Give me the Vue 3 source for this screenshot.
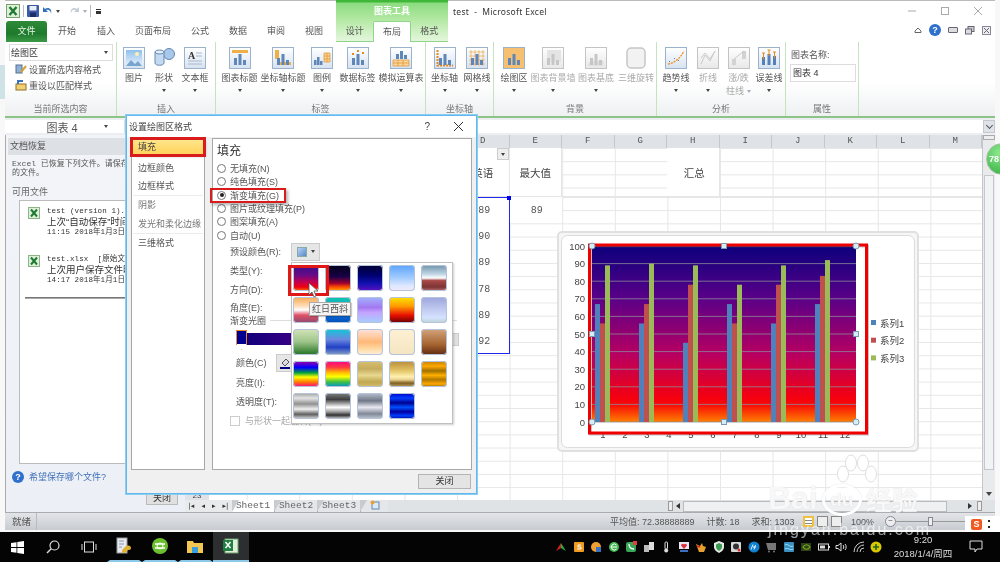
<script setup>
const tabs = [
  { label: '开始', w: 40 }, { label: '插入', w: 38 }, { label: '页面布局', w: 56 }, { label: '公式', w: 38 },
  { label: '数据', w: 38 }, { label: '审阅', w: 38 }, { label: '视图', w: 38 }
]
const toolTabs = ['设计', '布局', '格式']

const groups = [
  { name: '插入', w: 99, items: [
    { icon: 'pic', label: '图片', w: 30 }, { icon: 'shape', label: '形状', arrow: 1, w: 30 }, { icon: 'text', label: '文本框', arrow: 1, w: 32 }
  ] },
  { name: '标签', w: 210, items: [
    { icon: 'title', label: '图表标题', arrow: 1, w: 43 }, { icon: 'axtitle', label: '坐标轴标题', arrow: 1, w: 44 },
    { icon: 'legend', label: '图例', arrow: 1, w: 34 }, { icon: 'labels', label: '数据标签', arrow: 1, w: 37 },
    { icon: 'table', label: '模拟运算表', arrow: 1, w: 50 }
  ] },
  { name: '坐标轴', w: 68, items: [
    { icon: 'axis', label: '坐标轴', arrow: 1, w: 33 }, { icon: 'grid', label: '网格线', arrow: 1, w: 32 }
  ] },
  { name: '背景', w: 163, items: [
    { icon: 'plot', label: '绘图区', arrow: 1, w: 36 }, { icon: 'wall', label: '图表背景墙', arrow: 1, off: 1, w: 42 },
    { icon: 'floor', label: '图表基底', arrow: 1, off: 1, w: 44 }, { icon: 'rotate', label: '三维旋转', off: 1, w: 36 }
  ] },
  { name: '分析', w: 129, items: [
    { icon: 'trend', label: '趋势线', arrow: 1, w: 34 }, { icon: 'lines', label: '折线', arrow: 1, off: 1, w: 30 },
    { icon: 'updown', label: '涨/跌', label2: '柱线', arrow: 1, off: 1, w: 31 }, { icon: 'error', label: '误差线', arrow: 1, w: 30 }
  ] }
]

const columns = ['D', 'E', 'F', 'G', 'H', 'I', 'J', 'K', 'L', 'M']
const englishScores = [89, 90, 89, 78, 89, 92]

const radios = [
  { label: '无填充(N)' }, { label: '纯色填充(S)' }, { label: '渐变填充(G)', on: true },
  { label: '图片或纹理填充(P)' }, { label: '图案填充(A)' }, { label: '自动(U)' }
]
const sideItems = [
  { label: '填充', on: true }, { label: '边框颜色' }, { label: '边框样式', line: true },
  { label: '阴影', dim: true }, { label: '发光和柔化边缘', dim: true, line: true }, { label: '三维格式' }
]

const presets = [
  'linear-gradient(#35108c,#6a0a84 40%,#c00050 65%,#f00010 85%,#ff7000)',
  'linear-gradient(#000018,#1a0048 45%,#a00030 70%,#ff5000 85%,#ffb000)',
  'linear-gradient(#000030,#000070 40%,#1010b0 70%,#6010c0)',
  'linear-gradient(#5aa4ff,#a4ccff 50%,#dfe8ff 80%,#f6e8fa)',
  'linear-gradient(#6f92a8,#bfd6e4 35%,#fff 50%,#a84848 60%,#7c3434 85%,#b87070)',
  'linear-gradient(#f8a850,#ffdcb8 35%,#fff 50%,#e05068 70%,#8c4870)',
  'linear-gradient(#10c8a8,#10a0d8 45%,#0860d0 80%,#0050b0)',
  'linear-gradient(#a0b4ff,#a478f0 40%,#c4a4ff 60%,#a4d0ff)',
  'linear-gradient(#ffe400,#ff9c00 35%,#e81000 70%,#600000)',
  'linear-gradient(#9ca4dc,#c0c8f0 45%,#d4e2ff 80%,#bcd0d0)',
  'linear-gradient(#d4e4b8,#9cc488 50%,#207020)',
  'linear-gradient(#10c8d4,#6c88e0 40%,#2040c4 70%,#88a4c4)',
  'linear-gradient(#ffe4dc,#ffb878 50%,#ffd8a0 75%,#fff0e0)',
  'linear-gradient(#fdf0d4,#f4e4c0)',
  'linear-gradient(#d4a47c,#a46430 60%,#602810)',
  'linear-gradient(#a800a0,#0000ff 25%,#00a040 45%,#ffff00 62%,#ff8000 80%,#ff0088)',
  'linear-gradient(#ff0088,#ff4040 25%,#ffc000 45%,#ffff00 60%,#40c040 80%,#0090d8)',
  'linear-gradient(#d8c070,#c4ac5c 30%,#e8d890 55%,#c0a850 80%,#d4bc6c)',
  'linear-gradient(#b88c3c,#e0c060 35%,#fff0b0 60%,#e8d090 72%,#806020 85%,#c0a060)',
  'linear-gradient(#c08000,#ffa800 20%,#a07000 38%,#ffb000 55%,#b07800 72%,#ffa800 88%,#a07000)',
  'linear-gradient(#a0a0a0,#e4e4e4 20%,#909090 42%,#f0f0f0 62%,#606060 82%,#e0e0e0)',
  'linear-gradient(#808080,#404040 25%,#fff 55%,#a0a0a0 72%,#303030 85%,#e0e0e0)',
  'linear-gradient(#b8c0d0,#707888 30%,#e8e8f0 55%,#808898 80%,#c4ccd4)',
  'linear-gradient(#0000c0,#0040ff 20%,#000090 38%,#0050ff 55%,#0000a0 72%,#0040ff 88%,#000090)'
]

// 图表数据，只有奇数分类有值
const yTicks = [0, 10, 20, 30, 40, 50, 60, 70, 80, 90, 100]
const xTicks = [1, 2, 3, 4, 5, 6, 7, 8, 9, 10, 11, 12]
const series = [
  { name: '系列1', color: '#4f81bd', values: [67, 56, 45, 67, 56, 67] },
  { name: '系列2', color: '#c0504d', values: [56, 67, 78, 56, 78, 83] },
  { name: '系列3', color: '#9bbb59', values: [89, 90, 89, 78, 89, 92] }
]
const plotX = 35
const plotY = 15
const plotW = 264
const plotH = 176
const yPos = (v) => plotY + plotH - (v / 100) * plotH
const bars = []
series.forEach((s, si) => {
  s.values.forEach((v, i) => {
    bars.push({ key: si + '-' + i, x: plotX + 3 + i * 44 + si * 5, y: yPos(v), h: (v / 100) * plotH, color: s.color })
  })
})
const roundHandles = [[plotX, plotY], [plotX + plotW, plotY], [plotX, plotY + plotH], [plotX + plotW, plotY + plotH]]
const squareHandles = [[plotX + plotW / 2, plotY], [plotX, plotY + plotH / 2], [plotX + plotW, plotY + plotH / 2], [plotX + plotW / 2, plotY + plotH]]
</script>

<template>
  <div class="screen">
    <div class="desk-strip"></div>
    <div class="window">
      <!-- title bar -->
      <div class="titlebar">
        <div class="qat">
          <svg width="14" height="14" viewBox="0 0 14 14"><rect x=".5" y=".5" width="13" height="13" fill="#dff0d8" stroke="#7aa070"/><path d="M3.5 3 L10.5 11 M10.5 3 L3.5 11" stroke="#1f7a35" stroke-width="2.4"/></svg>
          <span class="qat-sep"></span>
          <svg width="12" height="12" viewBox="0 0 12 12"><rect width="12" height="12" rx="1" fill="#3b5aa8"/><rect x="2.5" y="1" width="7" height="4.5" fill="#e8eef8"/><rect x="3" y="7.5" width="6" height="4.5" fill="#1c2f66"/></svg>
          <svg width="11" height="11" viewBox="0 0 11 11"><path d="M1 1v5h5L4.2 4.2C6 3 8.600 4 9 7.500 10.500 3.500 6.500.5 3 3z" fill="#2f6fc0"/></svg>
          <span class="mini-arrow dark"></span>
          <svg class="redo" width="11" height="11" viewBox="0 0 11 11"><path d="M10 1v5H5l1.800-1.800C5 3 2.400 4 2 7.500.5 3.500 4.500.5 8 3z" fill="#c4ccd4"/></svg>
          <span class="mini-arrow"></span>
          <span class="qat-sep"></span>
          <span class="qat-more"></span>
        </div>
        <div class="tool-head">图表工具</div>
        <div class="doc-title">test &nbsp;-&nbsp; Microsoft Excel</div>
        <div class="win-ctrl">
          <svg width="10" height="10" viewBox="0 0 10 10"><path d="M1 5h8" stroke="#aaa"/></svg>
          <svg width="10" height="10" viewBox="0 0 10 10"><rect x="1.500" y="1.500" width="7" height="7" fill="none" stroke="#aaa"/></svg>
          <svg width="10" height="10" viewBox="0 0 10 10"><path d="M1 1l8 8M9 1l-8 8" stroke="#aaa"/></svg>
        </div>
      </div>

      <!-- tabs -->
      <div class="tabbar">
        <div class="file-tab">文件</div>
        <div v-for="t in tabs" :key="t.label" class="tab" :style="{ width: t.w + 'px' }">{{ t.label }}</div>
        <div class="tool-tabs">
          <div v-for="t in toolTabs" :key="t" class="tool-tab" :class="{ active: t === '布局' }">{{ t }}</div>
        </div>
        <div class="help-icons">
          <svg width="8" height="8" viewBox="0 0 8 8"><path d="M1 5l3-3 3 3v1.500H1z" fill="none" stroke="#666"/></svg>
          <span class="help-dot">?</span>
          <span class="app-min"></span>
          <svg width="10" height="9" viewBox="0 0 10 9"><rect x="3" y=".5" width="6" height="5" fill="#ccc" stroke="#667"/><rect x=".5" y="3" width="6" height="5" fill="#ddd" stroke="#667"/></svg>
          <svg width="9" height="9" viewBox="0 0 9 9"><rect x=".5" y=".5" width="8" height="8" fill="#eee" stroke="#889"/><path d="M2 2l5 5M7 2l-5 5" stroke="#667"/></svg>
        </div>
      </div>

      <!-- ribbon -->
      <div class="ribbon">
        <div class="rgroup first">
          <div class="rbody column">
            <div class="combo"><span>绘图区</span><span class="mini-arrow dark"></span></div>
            <div class="cmd">
              <svg width="12" height="12" viewBox="0 0 12 12"><rect x="1" y="2" width="6" height="8" fill="#8fb0d8" stroke="#56708c"/><path d="M6 9l5-6" stroke="#d8a030" stroke-width="2"/></svg>
              设置所选内容格式
            </div>
            <div class="cmd">
              <svg width="12" height="12" viewBox="0 0 12 12"><rect x="1" y="5" width="10" height="6" fill="#f0d070" stroke="#907030"/><path d="M3 5V2h5" fill="none" stroke="#3a70c0" stroke-width="2"/></svg>
              重设以匹配样式
            </div>
          </div>
          <div class="rname">当前所选内容</div>
        </div>

        <div v-for="g in groups" :key="g.name" class="rgroup" :style="{ width: g.w + 'px' }">
          <div class="rbody">
            <div v-for="it in g.items" :key="it.label" class="ritem" :class="{ off: it.off }" :style="{ width: it.w + 'px' }">
              <svg width="22" height="22" viewBox="0 0 22 22" class="ricon">
                <defs>
                  <linearGradient id="frame" x1="0" y1="0" x2="0" y2="1"><stop offset="0" stop-color="#ffffff"/><stop offset="1" stop-color="#d6e2f0"/></linearGradient>
                  <linearGradient id="sky" x1="0" y1="0" x2="0" y2="1"><stop offset="0" stop-color="#8fc0ec"/><stop offset="1" stop-color="#e8f2fb"/></linearGradient>
                </defs>
                <template v-if="it.icon === 'shape'">
                  <ellipse cx="16" cy="7" rx="5.500" ry="5.500" fill="#a8c8ea" stroke="#6488b0"/>
                  <path d="M2 5v11c0 3 9 3 9 0V5z" fill="#c4daf0" stroke="#6488b0"/>
                  <ellipse cx="6.500" cy="5" rx="4.500" ry="2" fill="#e4eefa" stroke="#6488b0"/>
                </template>
                <template v-else-if="it.icon === 'rotate'">
                  <rect x="2" y="1" width="18" height="20" rx="4" fill="#eeeeee" stroke="#b4b4b4" stroke-width="1.500"/>
                </template>
                <template v-else>
                  <rect x=".5" y=".5" width="21" height="21" :fill="it.icon === 'plot' ? '#f6c070' : 'url(#frame)'" stroke="#9ab2cc"/>
                  <template v-if="it.icon === 'pic'">
                    <rect x="3" y="3" width="16" height="16" fill="url(#sky)"/>
                    <circle cx="14" cy="7" r="2" fill="#fff2b0"/>
                    <path d="M3 19l5-6 4 4 3-3 4 5z" fill="#78a4d0"/>
                  </template>
                  <template v-else-if="it.icon === 'text'">
                    <text x="4" y="12" class="icon-a">A</text>
                    <path d="M12 6h6M12 9h6M4 14h14M4 17h14" stroke="#a8b8cc"/>
                  </template>
                  <template v-else-if="it.icon === 'trend'">
                    <path d="M3 17C9 16 15 12 19 4" fill="none" stroke="#f09020" stroke-width="1.300" stroke-dasharray="2 1"/>
                    <path d="M4 14l1 1M9 11l1 1M13 13l1 1" stroke="#5880b0"/>
                  </template>
                  <template v-else-if="it.icon === 'lines'">
                    <path d="M4 17l4-9 5 6 5-10M4 11l4-5 5 6 5-8" fill="none" stroke="#b8b8b8"/>
                  </template>
                  <template v-else-if="it.icon === 'updown'">
                    <path d="M4 18V12h4v6zM14 12V4h4v8z" fill="#c4c4c4"/><path d="M6 12l10-8" stroke="#b8b8b8"/>
                  </template>
                  <template v-else-if="it.icon === 'error'">
                    <path d="M4 18v-8h3v8zM9.500 18V7h3v11zM15 18v-9h3v9z" fill="#5880b8"/>
                    <path d="M5.500 6v6M11 3v6M16.500 5v6M4 6h3M9.500 3h3M15 5h3" stroke="#e88820"/>
                  </template>
                  <template v-else>
                    <rect v-if="it.icon === 'title'" x="3" y="3" width="16" height="3" fill="#f0b048"/>
                    <rect v-if="it.icon === 'axtitle'" x="3" y="3" width="4" height="9" fill="#f0b048"/>
                    <rect v-if="it.icon === 'axtitle'" x="6" y="15" width="13" height="3" fill="#f0b048"/>
                    <path v-if="it.icon === 'legend'" d="M13 6h6v9h-6zM13 9h6M13 12h6M16 6v9" fill="#f8d898" stroke="#e09030" stroke-width=".7"/>
                    <path v-if="it.icon === 'labels'" d="M5 7h2M10 4h2M15 6h2" stroke="#e88820" stroke-width="2"/>
                    <path v-if="it.icon === 'table'" d="M3 13h16v6H3zM3 16h16M8 13v6M13 13v6" fill="#f8d898" stroke="#e09030" stroke-width=".7"/>
                    <path v-if="it.icon === 'axis'" d="M3.500 3v15.500H19" fill="none" stroke="#e88820" stroke-width="2" stroke-dasharray="2 1"/>
                    <path v-if="it.icon === 'grid'" d="M3 5h16M3 9h16M3 13h16M3 17h16M5 3v16M9 3v16M13 3v16M17 3v16" stroke="#f0b060" stroke-width=".8"/>
                    <path v-if="it.icon === 'floor'" d="M3 17l3-3h13l-1 5H3z" fill="#d8d8d8"/>
                    <path v-if="it.icon === 'wall'" d="M5 3h14v12H5z" fill="#dcdcdc"/>
                    <path :d="it.icon === 'table' ? 'M6 12V7h3v5zM10 12V4h3v8zM14 12V8h3v4z' : it.icon === 'legend' ? 'M3 18v-5h2.500v5zM6 18v-8h2.500v8zM9 18v-4h2.500v4z' : 'M5 18v-7h3v7zM9.500 18V7h3v11zM14 18v-5h3v5z'" :fill="it.off ? '#b4b4b4' : '#5f86b8'"/>
                  </template>
                </template>
              </svg>
              <div class="rlabel">{{ it.label }}</div>
              <div v-if="it.label2" class="rlabel">{{ it.label2 }}<span class="mini-arrow inline"></span></div>
              <span v-else-if="it.arrow" class="mini-arrow dark under"></span>
            </div>
          </div>
          <div class="rname">{{ g.name }}</div>
        </div>

        <div class="rgroup props">
          <div class="rbody column">
            <div class="prop-label">图表名称:</div>
            <div class="prop-input">图表 4</div>
          </div>
          <div class="rname">属性</div>
        </div>
      </div>

      <!-- formula bar -->
      <div class="formula">
        <div class="namebox"><span>图表 4</span><span class="mini-arrow dark"></span></div>
        <div class="fx-input"></div>
        <div class="fx-expand"><span class="chev"></span></div>
      </div>

      <div class="main">
        <!-- recovery pane -->
        <aside class="pane">
          <div class="pane-head">文档恢复</div>
          <div class="pane-text">Excel 已恢复下列文件。请保存要保留<br>的文件。</div>
          <div class="pane-sub">可用文件</div>
          <div class="file-list">
            <div class="file-card">
              <svg width="12" height="12" viewBox="0 0 12 12"><rect x=".5" y=".5" width="11" height="11" fill="#dff0d8" stroke="#8cb484"/><path d="M3 2.500l6 7M9 2.500l-6 7" stroke="#1f7a35" stroke-width="2"/></svg>
              <div class="file-info">
                <div class="mono">test (version 1).xlsx</div>
                <div>上次“自动保存”时间</div>
                <div class="mono">11:15 2018年1月3日</div>
              </div>
            </div>
            <div class="file-card">
              <svg width="12" height="12" viewBox="0 0 12 12"><rect x=".5" y=".5" width="11" height="11" fill="#dff0d8" stroke="#8cb484"/><path d="M3 2.500l6 7M9 2.500l-6 7" stroke="#1f7a35" stroke-width="2"/></svg>
              <div class="file-info">
                <div class="mono">test.xlsx &nbsp;[原始文件]</div>
                <div>上次用户保存文件时间</div>
                <div class="mono">14:17 2018年1月1日</div>
              </div>
            </div>
            <div class="file-rule"></div>
          </div>
          <div class="pane-help"><span class="help-dot big">?</span>希望保存哪个文件?</div>
          <div class="pane-foot"><div class="pane-close">关闭</div></div>
        </aside>

        <!-- worksheet -->
        <section class="sheet">
          <div class="sheet-area">
            <div class="cells">
              <div class="col-heads">
                <div class="col-spacer"></div>
                <div v-for="c in columns" :key="c" class="col-head">{{ c }}</div>
              </div>
              <div class="head-rows">
                <div class="head-cell col-d">英语<span class="filter"><i class="mini-arrow dark"></i></span></div>
                <div class="head-cell col-e">最大值</div>
                <div class="head-cell col-h">汇总</div>
              </div>
              <div class="data-rows">
                <div v-for="(v, i) in englishScores" :key="i" class="score">{{ v }}</div>
                <div class="max-cell">89</div>
                <div class="selection"><span class="sel-handle"></span></div>
              </div>
              <div class="row-num">23</div>
            </div>
            <div class="vscroll">
              <span class="v-split"></span>
              <span class="v-thumb"></span>
              <span class="v-down"></span>
            </div>
          </div>

          <div class="sheet-tabs">
            <div class="tab-nav"><i>|◂</i><i>◂</i><i>▸</i><i>▸|</i></div>
            <div class="sheet-tab active">Sheet1</div>
            <div class="sheet-tab">Sheet2</div>
            <div class="sheet-tab">Sheet3</div>
            <div class="sheet-tab new">
              <svg width="10" height="10" viewBox="0 0 10 10"><rect x="2" y="2" width="7" height="7" fill="#dce8f6" stroke="#6088b0"/><circle cx="2.500" cy="2.500" r="2" fill="#e8a030"/></svg>
            </div>
            <div class="hscroll">
              <span class="h-split"></span>
              <span class="h-left"></span>
              <span class="h-thumb"></span>
              <span class="h-right"></span>
              <span class="h-split end"></span>
            </div>
          </div>

          <!-- chart sits on top of the cells -->
          <div class="chart-box">
            <svg width="362" height="221" viewBox="0 0 362 221" class="chart-svg">
              <defs>
                <linearGradient id="plotfill" x1="0" y1="0" x2="0" y2="1">
                  <stop offset="0" stop-color="#0c007c"/>
                  <stop offset=".3" stop-color="#5a0088"/>
                  <stop offset=".62" stop-color="#b80060"/>
                  <stop offset=".86" stop-color="#f40010"/>
                  <stop offset=".9" stop-color="#f80808"/>
                  <stop offset="1" stop-color="#ff8000"/>
                </linearGradient>
              </defs>
              <rect x="1" y="1" width="360" height="219" rx="4" fill="#f6f6f6" stroke="#e0e0e0" stroke-width="2"/>
              <rect x="4.500" y="4.500" width="353" height="212" rx="6" fill="#fff" stroke="#dcdcdc"/>
              <rect :x="plotX" :y="plotY" :width="plotW" :height="plotH" fill="url(#plotfill)"/>
              <line v-for="t in yTicks" :key="'g' + t" :x1="plotX" :x2="plotX + plotW" :y1="yPos(t)" :y2="yPos(t)" stroke="#8a8a98" stroke-width=".8"/>
              <rect v-for="b in bars" :key="b.key" :x="b.x" :y="b.y" width="5" :height="b.h" :fill="b.color"/>
              <text v-for="t in yTicks" :key="'y' + t" :x="plotX - 7" :y="yPos(t) + 3.500" class="axis-num" text-anchor="end">{{ t }}</text>
              <text v-for="t in xTicks" :key="'x' + t" :x="plotX + 11 + (t - 1) * 22" :y="207" class="axis-num" text-anchor="middle">{{ t }}</text>
              <rect x="33.500" y="15" width="277" height="188" fill="none" stroke="#555" stroke-opacity=".35" stroke-width="3"/>
              <rect x="32.500" y="14" width="277" height="188" fill="none" stroke="#ee0000" stroke-width="3"/>
              <template v-for="(s, i) in series" :key="s.name">
                <rect x="314" :y="89 + i * 17.700" width="5" height="5" :fill="s.color"/>
                <text x="323" :y="95.500 + i * 17.700" class="legend-text">{{ s.name }}</text>
              </template>
              <circle v-for="(h, i) in roundHandles" :key="'r' + i" :cx="h[0]" :cy="h[1]" r="3" fill="#d4eef8" stroke="#7a9ab0"/>
              <rect v-for="(h, i) in squareHandles" :key="'s' + i" :x="h[0] - 2.500" :y="h[1] - 2.500" width="5" height="5" fill="#d4eef8" stroke="#7a9ab0"/>
            </svg>
          </div>
        </section>
      </div>

      <!-- status bar -->
      <footer class="status">
        <div class="ready">就绪</div>
        <div class="stat-nums">
          <span>平均值: 72.38888889</span><span>计数: 18</span><span>求和: 1303</span>
        </div>
        <div class="views">
          <span class="view on"></span><span class="view"></span><span class="view"></span>
        </div>
        <div class="zoom">100%</div>
        <div class="zoom-slider"><span class="zs-btn">−</span><span class="zs-track"><i></i></span><span class="zs-btn">+</span></div>
      </footer>
    </div>

    <!-- format dialog -->
    <div class="dialog">
      <div class="dlg-title">
        <span>设置绘图区格式</span>
        <span class="dlg-q">?</span>
        <svg width="11" height="11" viewBox="0 0 11 11"><path d="M1 1l9 9M10 1l-9 9" stroke="#333" stroke-width="1"/></svg>
      </div>
      <div class="dlg-body">
        <div class="side">
          <div v-for="s in sideItems" :key="s.label" class="side-item" :class="{ on: s.on, dim: s.dim, line: s.line }">{{ s.label }}</div>
        </div>
        <div class="panel">
          <div class="panel-title">填充</div>
          <div v-for="r in radios" :key="r.label" class="radio-row" :class="{ marked: r.on }">
            <span class="radio" :class="{ on: r.on }"></span>{{ r.label }}
          </div>
          <div class="frow preset-row">预设颜色(R):
            <span class="preset-btn"><i class="preset-chip"></i><i class="mini-arrow dark"></i></span>
          </div>
          <div class="frow h19">类型(Y):</div>
          <div class="frow h19">方向(D):</div>
          <div class="frow h18">角度(E):</div>
          <div class="frow stops-title"><span>渐变光圈</span><i></i></div>
          <div class="stops">
            <span class="stop-mark"></span>
            <span class="stop-bar"></span>
            <span class="stop-btn"></span>
          </div>
          <div class="frow sub">颜色(C)
            <span class="color-btn">
              <svg width="12" height="12" viewBox="0 0 12 12"><path d="M2 6l4-4 3 3-4 4z" fill="#ddd" stroke="#556"/><path d="M0 10h10v2H0z" fill="#000080"/></svg>
            </span>
          </div>
          <div class="frow sub">亮度(I):</div>
          <div class="frow sub">透明度(T):</div>
          <div class="check-row"><span class="check"></span>与形状一起旋转(W)</div>

          <!-- preset dropdown -->
          <div class="gallery">
            <div v-for="(p, i) in presets" :key="i" class="swatch" :style="{ background: p }"></div>
            <div class="swatch-mark"></div>
            <div class="tip">红日西斜</div>
            <svg class="cursor" width="11" height="16" viewBox="0 0 11 16"><path d="M1 1v12l3-3 2 5 2-1-2-5h4z" fill="#fff" stroke="#555" stroke-width=".8"/></svg>
          </div>
        </div>
      </div>
      <div class="dlg-foot"><div class="dlg-close">关闭</div></div>
    </div>

    <!-- green badge -->
    <div class="badge">78</div>

    <!-- input method icon -->
    <div class="ime"><span class="ime-s">S</span><span class="ime-dots"></span></div>

    <!-- task bar -->
    <div class="taskbar">
      <div class="task-left">
        <span class="task-slot">
          <svg width="13" height="13" viewBox="0 0 13 13"><path d="M0 2l5.500-.8V6H0zM6.300 1.100L13 0v6H6.300zM0 7h5.500v4.800L0 11zM6.300 7H13v6l-6.700-1z" fill="#fff"/></svg>
        </span>
        <span class="task-slot">
          <svg width="14" height="14" viewBox="0 0 14 14"><circle cx="8.500" cy="5.500" r="4.500" fill="none" stroke="#ddd" stroke-width="1.200"/><path d="M5.200 8.800L1 13" stroke="#ddd" stroke-width="1.400"/></svg>
        </span>
        <span class="task-slot">
          <svg width="16" height="12" viewBox="0 0 16 12"><rect x="3.500" y="1" width="9" height="10" fill="none" stroke="#ddd"/><path d="M1 3v6M15 3v6" stroke="#ddd"/></svg>
        </span>
        <span class="task-slot">
          <svg width="18" height="18" viewBox="0 0 18 18"><rect x="2" y="1" width="10" height="15" fill="#e8eaf0" stroke="#999"/><path d="M11 9c3-1 5 0 5 2s-2 2-3 2-1 3-4 3-2-3-1-4 2-2 3-3z" fill="#e0b030"/><path d="M4 4h5M4 7h5M4 10h3" stroke="#8899aa"/></svg>
        </span>
        <span class="task-slot">
          <svg width="18" height="18" viewBox="0 0 18 18"><circle cx="9" cy="9" r="8" fill="#6cc030"/><path d="M4 7h10M4 11h10" stroke="#fff" stroke-width="1.500"/><circle cx="9" cy="9" r="3" fill="none" stroke="#fff"/></svg>
        </span>
        <span class="task-slot">
          <svg width="18" height="16" viewBox="0 0 18 16"><path d="M1 3h6l1 2h9v10H1z" fill="#f4c850"/><rect x="6" y="9" width="6" height="6" fill="#38a0e0"/></svg>
        </span>
        <span class="task-slot active">
          <svg width="18" height="18" viewBox="0 0 18 18"><rect x="3" y="2" width="13" height="14" fill="#e0f0d8" stroke="#70a070"/><rect x="1" y="3" width="10" height="11" fill="#1f8040"/><path d="M3.500 5l5 6M8.500 5l-5 6" stroke="#fff" stroke-width="1.500"/></svg>
        </span>
      </div>
      <div class="tray">
        <svg viewBox="0 0 12 12"><path d="M6 2L1 10l5-3z" fill="#e02020"/><path d="M6 2l5 8-5-3z" fill="#20b040"/></svg>
        <svg viewBox="0 0 12 12"><rect x="1" y="1" width="10" height="10" rx="1" fill="#f09a20"/><path d="M8 4H5v2h3v2H4" fill="none" stroke="#fff"/></svg>
        <svg viewBox="0 0 12 12"><circle cx="6" cy="6" r="5" fill="#f0a030"/><rect x="6" y="6" width="5" height="5" fill="#3a70c0"/></svg>
        <svg viewBox="0 0 12 12"><circle cx="6" cy="6" r="5" fill="#40b850"/><path d="M3 6h6M8.500 8a3 3 0 1 1 0-4" fill="none" stroke="#fff"/></svg>
        <svg viewBox="0 0 12 12"><rect x="1" y="1" width="10" height="10" rx="2" fill="#38a858"/><path d="M4 3c0 3 2 5 5 5" fill="none" stroke="#fff" stroke-width="1.300"/><rect x="8" y="0" width="4" height="4" fill="#e04040"/></svg>
        <svg viewBox="0 0 12 12"><rect x="6" y="1" width="5" height="8" fill="#ddd"/><rect x="1" y="4" width="5" height="7" fill="#bbb"/></svg>
        <svg viewBox="0 0 12 12"><rect x="5" y="1" width="2.500" height="7" rx="1" fill="none" stroke="#ddd"/><circle cx="6.200" cy="9.500" r="2" fill="#ddd"/></svg>
        <svg viewBox="0 0 12 12"><rect x="1" y="1" width="10" height="7" fill="#e8e8f4"/><path d="M6 8L3 4.500a1.700 1.700 0 0 1 3-1 1.700 1.700 0 0 1 3 1z" fill="#d83040"/><rect x="2" y="9" width="8" height="2" fill="#3a70c0"/></svg>
        <svg viewBox="0 0 12 12"><path d="M1 3l4 2 2-3 1 3 3 1-2 5H4z" fill="#e8a030"/><path d="M2 5l3 1" stroke="#d02020" stroke-width="1.500"/></svg>
        <svg viewBox="0 0 12 12"><path d="M6 0l5 2v4c0 3-3 5-5 6-2-1-5-3-5-6V2z" fill="#e8e8e8"/><path d="M6 2l3 1.500V6c0 2-2 3-3 4-1-1-3-2-3-4V3.500z" fill="#3a9a50"/></svg>
        <svg viewBox="0 0 12 12"><rect x="1" y="1" width="10" height="10" rx="1" fill="#d8d8d8"/><circle cx="6" cy="5.500" r="3" fill="#333"/><circle cx="9" cy="9" r="1.500" fill="#d83030"/></svg>
        <svg viewBox="0 0 12 12"><circle cx="6" cy="6" r="5.500" fill="#1080d0"/><path d="M5 3.500l-2 5M7.500 4L6 8.500M5 6h3" stroke="#fff" stroke-width=".9" fill="none"/></svg>
        <svg viewBox="0 0 12 12"><path d="M1 2h10v7H3z" fill="#777"/><circle cx="4" cy="10.500" r="1" fill="#777"/><circle cx="9" cy="10.500" r="1" fill="#777"/></svg>
        <svg viewBox="0 0 12 12"><rect x="1" y="1" width="10" height="10" rx="1" fill="#3a90c0"/><path d="M2 4c3-2 5 3 8 1M2 8c3-2 5 2 8 0" fill="none" stroke="#9adcf0"/></svg>
        <svg viewBox="0 0 12 12"><rect x="1" y="2" width="10" height="8" fill="#304018"/><path d="M3 6c2-3 5-3 7 0-2 3-5 3-7 0z" fill="none" stroke="#78b020" stroke-width="1.200"/></svg>
        <svg viewBox="0 0 12 12"><rect x=".5" y="3" width="10" height="6" fill="none" stroke="#ddd"/><rect x="2" y="4.500" width="5" height="3" fill="#ddd"/><rect x="10.500" y="5" width="1.500" height="2" fill="#ddd"/></svg>
        <svg viewBox="0 0 12 12"><path d="M1 4.500h2L6 2v8L3 7.500H1z" fill="none" stroke="#ddd"/><path d="M8 4c1 1 1 3 0 4M10 3c1.500 1.500 1.500 4.500 0 6" fill="none" stroke="#ddd"/></svg>
        <svg viewBox="0 0 12 12"><path d="M1 11a10 10 0 0 1 10-10M4 11a7 7 0 0 1 7-7M7 11a4 4 0 0 1 4-4" fill="none" stroke="#ccc"/><path d="M10 11h1v-1z" fill="#ccc"/></svg>
        <svg viewBox="0 0 12 12"><circle cx="6" cy="6" r="5.500" fill="#d8c800"/><path d="M3 6h6M6 3v6" stroke="#226020" stroke-width="1.600"/></svg>
      </div>
      <div class="clock"><div>9:20</div><div>2018/1/4/周四</div></div>
      <div class="notify">
        <svg width="14" height="13" viewBox="0 0 14 13"><path d="M1 1h12v8H8l-2 3V9H1z" fill="none" stroke="#ddd"/></svg>
      </div>
    </div>

    <!-- watermark -->
    <div class="watermark">
      <svg class="wm-paw" width="44" height="30" viewBox="0 0 44 30">
        <ellipse cx="9" cy="20" rx="5.500" ry="8"/><ellipse cx="17" cy="9" rx="5.500" ry="8"/><ellipse cx="29" cy="9" rx="5.500" ry="8"/><ellipse cx="37" cy="20" rx="5.500" ry="8"/>
      </svg>
      <div class="wm-top">
        <span class="wm-bai">Bai</span>
        <span class="wm-du">du</span>
        <span class="wm-cn">经验</span>
      </div>
      <div class="wm-url">jingyan.baidu.com</div>
    </div>
  </div>
</template>

<style>
html, body { margin: 0; background: #fff; }
</style>

<style scoped>
.screen {
  position: relative;
  width: 1000px;
  height: 562px;
  overflow: hidden;
  background: #f8f8f8;
  font-family: "Liberation Sans", "Noto Sans CJK SC", sans-serif;
  font-size: 9px;
  color: #444;
  display: flex;
  flex-direction: column;
  filter: blur(.35px);
}
.desk-strip {
  position: absolute;
  left: 0;
  top: 65px;
  width: 5px;
  height: 34px;
  background: #cfe2e6;
}
.window {
  height: 530px;
  margin: 0 5px;
  background: #eceef1;
  display: flex;
  flex-direction: column;
  border-top: 1px solid #bbb;
  box-sizing: border-box;
}
.titlebar {
  height: 20px;
  background: #fff;
  display: flex;
  align-items: center;
  position: relative;
  flex: none;
}
.qat { display: flex; align-items: center; gap: 3px; padding-left: 1px; width: 331px; flex: none; box-sizing: border-box; }
.qat-sep { width: 1px; height: 12px; background: #bbb; }
.qat-more { width: 5px; height: 5px; border-top: 1px solid #333; border-bottom: 3px solid #333; box-sizing: border-box; margin-left: 2px; }
.redo { margin-left: 6px; }
.mini-arrow {
  display: inline-block;
  width: 0;
  height: 0;
  border-left: 2.5px solid transparent;
  border-right: 2.5px solid transparent;
  border-top: 3px solid #aab;
  flex: none;
}
.mini-arrow.dark { border-top-color: #444; }
.mini-arrow.under { display: block; margin: 5px auto 0; }
.mini-arrow.inline { margin-left: 3px; vertical-align: middle; }
.tool-head {
  width: 112px;
  flex: none;
  background: linear-gradient(#3fb83a 0, #3fb83a 2px, #8cdc80 3px, #b8eaa8);
  color: #fff;
  text-align: center;
  line-height: 22px;
  font-size: 9px;
  font-weight: bold;
  align-self: flex-start;
  margin-top: -1px;
  height: 22px;
}
.doc-title { margin-left: 5px; font-size: 8.5px; color: #333; letter-spacing: .3px; font-family: "Noto Sans", sans-serif; }
.win-ctrl { position: absolute; right: 12px; top: 5px; display: flex; gap: 23px; }

.tabbar {
  height: 21px;
  background: #fff;
  display: flex;
  align-items: stretch;
  position: relative;
  flex: none;
}
.file-tab {
  width: 41px;
  margin-left: 1px;
  background: linear-gradient(#2f8a38, #1e7a2c 60%, #3a9a45);
  color: #e8f4e8;
  text-align: center;
  line-height: 21px;
  border-radius: 3px 3px 0 0;
  font-size: 9px;
}
.tab { text-align: center; line-height: 21px; color: #555; }
.tool-tabs {
  display: flex;
  margin-left: 3px;
  width: 112px;
  background: linear-gradient(#b8eaa8, #e4f6dc);
  border-bottom: 1px solid #8fd488;
  box-sizing: border-box;
}
.tool-tab { width: 37.5px; text-align: center; line-height: 21px; color: #555; }
.tool-tab.active {
  background: #fff;
  border: 1px solid #8fd488;
  border-bottom: 0;
  border-radius: 2px 2px 0 0;
  height: 21px;
  line-height: 20px;
  box-sizing: border-box;
  z-index: 1;
}
.help-icons {
  position: absolute;
  right: 4px;
  top: 3px;
  display: flex;
  gap: 7px;
  align-items: center;
}
.help-dot {
  width: 12px;
  height: 12px;
  border-radius: 50%;
  background: #2f70cc;
  color: #fff;
  text-align: center;
  line-height: 12px;
  font-size: 9px;
  font-weight: bold;
  display: inline-block;
}
.help-dot.big { margin-right: 5px; flex: none; }
.app-min { width: 8px; height: 4px; border: 1px solid #667; background: #ddd; border-radius: 1px; }

.ribbon {
  flex: none;
  display: flex;
  background: linear-gradient(#fff 55%, #eef0f2);
  border-top: 1px solid #9cd896;
  border-bottom: 2px solid #8cc488;
  box-sizing: border-box;
  height: 77px;
  margin-top: -1px;
}
.rgroup {
  display: flex;
  flex-direction: column;
  border-right: 1px solid #c4e4c0;
  box-sizing: border-box;
  flex: none;
}
.rgroup.first { width: 112px; }
.rgroup.props { width: 73px; }
.rbody { flex: 1; display: flex; padding-top: 5px; padding-left: 2px; min-height: 0; }
.rbody.column { flex-direction: column; padding-top: 2px; }
.rname { height: 16px; line-height: 18px; text-align: center; color: #777; flex: none; }
.combo {
  width: 104px;
  height: 17px;
  margin-left: 2px;
  border: 1px solid #ddd;
  background: #fff;
  display: flex;
  align-items: center;
  justify-content: space-between;
  padding: 0 4px 0 1px;
  box-sizing: border-box;
  color: #333;
}
.cmd { display: flex; align-items: center; gap: 2px; height: 16px; margin-left: 8px; color: #555; }
.ritem { display: flex; flex-direction: column; align-items: center; flex: none; }
.ricon { flex: none; }
.rlabel { white-space: nowrap; line-height: 12px; margin-top: 3px; color: #555; }
.rlabel + .rlabel { margin-top: 1px; }
.ritem.off .ricon { filter: grayscale(1); opacity: .75; }
.ritem.off .rlabel { color: #aaa; }
.icon-a { font: bold 10px "Liberation Serif", serif; fill: #333; }
.prop-label { margin: 5px 0 0 3px; color: #555; line-height: 12px; }
.prop-input {
  margin: 3px 0 0 2px;
  width: 66px;
  height: 18px;
  background: #fff;
  border: 1px solid #ddd;
  box-sizing: border-box;
  line-height: 16px;
  padding-left: 2px;
  color: #333;
  font-size: 9px;
}

.formula {
  height: 13px;
  margin-top: 2px;
  flex: none;
  display: flex;
  background: #fff;
}
.namebox {
  width: 119px;
  margin-left: 1px;
  display: flex;
  align-items: center;
  justify-content: center;
  gap: 26px;
  font-size: 11px;
  color: #555;
  padding-left: 24px;
  box-sizing: border-box;
  border-right: 1px solid #ddd;
}
.fx-input { flex: 1; }
.fx-expand {
  width: 12px;
  background: #dfe3e8;
  border: 1px solid #c4c8cc;
  box-sizing: border-box;
  text-align: center;
  line-height: 8px;
}
.chev { display: inline-block; width: 4px; height: 4px; border-right: 1px solid #555; border-bottom: 1px solid #555; transform: rotate(45deg); }

.main { flex: 1; min-height: 0; display: flex; margin-top: 2px; background: #d4d8dc; }
.pane {
  width: 180px;
  flex: none;
  background: linear-gradient(#f2f4f8, #ecf0f6);
  display: flex;
  flex-direction: column;
  border-left: 1px solid #aaa;
  box-sizing: border-box;
}
.pane-head {
  height: 17px;
  margin: 3px 0 0 2px;
  background: #dde0e4;
  line-height: 17px;
  padding-left: 2px;
  color: #555;
}
.pane-text { margin: 4px 0 0 6px; white-space: nowrap; line-height: 9px; font-size: 8px; font-family: "Liberation Mono", "Noto Sans CJK SC", monospace; color: #555; }
.pane-sub { margin: 9px 0 0 6px; color: #666; line-height: 12px; }
.file-list {
  margin: 2px 0 0 13px;
  height: 264px;
  background: #fff;
  border: 1px solid #bbb;
  border-right: 0;
  box-sizing: border-box;
}
.file-card { display: flex; gap: 7px; padding: 5px 0 0 8px; height: 48px; box-sizing: border-box; }
.file-card svg { flex: none; margin-top: 1px; }
.file-info { font-size: 9.500px; line-height: 10.500px; white-space: nowrap; color: #333; }
.mono { font-family: "Liberation Mono", "Noto Sans CJK SC", monospace; font-size: 7.500px; letter-spacing: .1px; }
.file-rule { height: 1px; margin: 0 0 0 5px; background: #777; border-bottom: 1px solid #aaa; }
.pane-help {
  flex: 1;
  display: flex;
  align-items: flex-start;
  padding: 7px 0 0 6px;
  color: #4070b8;
  line-height: 12px;
}
.pane-foot { height: 20px; display: flex; justify-content: flex-end; padding-right: 7px; }
.pane-close {
  width: 30px;
  height: 11px;
  background: #e0e0e0;
  border: 1px solid #bbb;
  text-align: center;
  line-height: 11px;
  color: #333;
}

.sheet { flex: 1; min-width: 0; display: flex; flex-direction: column; position: relative; background: #fff; }
.sheet-area { flex: 1; min-height: 0; display: flex; }
.cells { flex: 1; min-width: 0; position: relative; overflow: hidden; }
.col-heads { height: 13px; display: flex; background: #dfe2e6; }
.col-spacer { width: 272px; flex: none; }
.col-head {
  flex: 1;
  text-align: center;
  line-height: 13px;
  font-family: "Liberation Mono", monospace;
  font-size: 9px;
  color: #555;
  border-right: 1px solid #c4c8cc;
}
.head-rows, .data-rows {
  background-image: linear-gradient(#e6e6e6 1px, transparent 1px), linear-gradient(90deg, #e6e6e6 1px, transparent 1px);
  background-size: 100% 13.2px, 52.6px 100%;
  background-position: 0 0, 272px 0;
  display: grid;
  grid-template-columns: 272px repeat(10, 1fr);
}
.head-rows { height: 48px; grid-template-rows: 48px; }
.head-cell {
  background: #fff;
  font-size: 10.500px;
  color: #444;
  display: flex;
  align-items: center;
  justify-content: center;
  border-right: 1px solid #e6e6e6;
  position: relative;
}
.col-d { grid-column: 2; }
.col-e { grid-column: 3; }
.col-h { grid-column: 6; padding-left: 3px; }
.filter {
  position: absolute;
  right: 0;
  top: 0;
  width: 12px;
  height: 12px;
  background: #eee;
  border: 1px solid #ccc;
  box-sizing: border-box;
  display: flex;
  align-items: center;
  justify-content: center;
}
.data-rows {
  height: 320px;
  position: relative;
  grid-auto-rows: 26.2px;
  border-top: 1px solid #e6e6e6;
  box-sizing: border-box;
}
.score, .max-cell {
  grid-column: 2;
  background: #fff;
  text-align: center;
  line-height: 28px;
  font-family: "Liberation Mono", monospace;
  font-size: 10px;
  color: #555;
  padding-left: 2px;
}
.max-cell { grid-column: 3; grid-row: 1; }
.selection {
  position: absolute;
  left: 272px;
  top: 0;
  width: 53px;
  height: 157px;
  border: 1px solid #2028f0;
  box-sizing: border-box;
}
.sel-handle { position: absolute; right: -2px; top: -2px; width: 4px; height: 4px; background: #0000f0; }
.row-num {
  position: absolute;
  left: 0;
  bottom: 0;
  width: 24px;
  height: 9px;
  background: #dfe2e6;
  text-align: center;
  line-height: 9px;
  font-size: 8px;
}
.vscroll {
  width: 12px;
  flex: none;
  background: #e8eaec;
  border-left: 1px solid #c4c8cc;
  position: relative;
}
.v-split { position: absolute; top: 0; left: 0; right: 0; height: 5px; background: #eee; border: 1px solid #aaa; box-sizing: border-box; }
.v-thumb { position: absolute; top: 40px; bottom: 30px; left: 1px; right: 1px; background: #f2f3f4; border: 1px solid #c4c8cc; }
.v-down { position: absolute; bottom: 4px; left: 3px; border-left: 3px solid transparent; border-right: 3px solid transparent; border-top: 4px solid #444; }

.sheet-tabs {
  height: 12px;
  flex: none;
  display: flex;
  background: #c8ccd0;
  font-family: "Liberation Mono", monospace;
  font-size: 9.500px;
}
.tab-nav { width: 47px; display: flex; justify-content: space-around; align-items: center; background: #e8eaec; font-size: 7px; color: #333; flex: none; font-family: "DejaVu Sans", sans-serif; }
.tab-nav i { font-style: normal; }
.sheet-tab {
  width: 42px;
  margin-right: 0;
  text-align: center;
  line-height: 12px;
  color: #666;
  background: #e4e6ea;
  clip-path: polygon(0 100%, 7px 0, calc(100% + 6px) 0, 100% 100%);
  flex: none;
}
.sheet-tab + .sheet-tab { border-left: 1px solid #999; }
.sheet-tab.active { background: #fff; }
.sheet-tab.new { width: 27px; text-align: center; }
.hscroll { flex: 1; position: relative; background: #e0e3e6; }
.h-split { position: absolute; left: 280px; top: 1px; width: 5px; height: 10px; background: #eee; border: 1px solid #999; box-sizing: border-box; }
.h-split.end { left: auto; right: 13px; }
.h-left { position: absolute; left: 288px; top: 3px; border-top: 3px solid transparent; border-bottom: 3px solid transparent; border-right: 4px solid #333; }
.h-thumb { position: absolute; left: 295px; width: 262px; top: 1px; height: 9px; background: #eef0f2; border: 1px solid #bbb; }
.h-right { position: absolute; right: 23px; top: 3px; border-top: 3px solid transparent; border-bottom: 3px solid transparent; border-left: 4px solid #333; }

.chart-box { position: absolute; left: 372px; top: 96px; width: 362px; height: 221px; }
.chart-svg { display: block; }
.axis-num { font: 9.500px "Liberation Sans", sans-serif; fill: #444; }
.legend-text { font: 9.500px "Liberation Sans", "Noto Sans CJK SC", sans-serif; fill: #444; }

.status {
  height: 18px;
  flex: none;
  display: flex;
  align-items: center;
  background: linear-gradient(#e2e4e8, #c8ccd0);
  border-top: 1px solid #a8acb0;
  box-sizing: border-box;
  position: relative;
  color: #555;
  font-size: 9.500px;
}
.ready { width: 32px; padding-left: 7px; box-sizing: border-box; border-right: 1px solid #b8bcc0; height: 100%; line-height: 17px; }
.stat-nums { margin-left: 573px; display: flex; gap: 12px; white-space: nowrap; width: 190px; flex: none; font-size: 9px; }
.views { display: flex; gap: 3px; margin-left: 3px; flex: none; }
.view { width: 11px; height: 11px; border: 1px solid #888; box-sizing: border-box; background: #eee; }
.view.on { background: repeating-linear-gradient(#fff 0 2px, #888 2px 3px); border: 2px solid #f0c040; }
.zoom { margin-left: 9px; font-size: 9px; width: 26px; flex: none; }
.zoom-slider { display: flex; align-items: center; margin-left: 8px; flex: 1; }
.zs-btn { width: 9px; height: 9px; border: 1px solid #889; border-radius: 50%; text-align: center; line-height: 8px; font-size: 8px; background: #eee; flex: none; }
.zs-track { width: 72px; height: 1px; background: #999; position: relative; }
.zs-track i { position: absolute; left: 32px; top: -4px; width: 5px; height: 9px; background: #eee; border: 1px solid #889; box-sizing: border-box; }

.dialog {
  position: absolute;
  left: 126px;
  top: 115px;
  width: 351px;
  height: 379px;
  background: #f0f0f0;
  border: 1px solid #62b8ee;
  box-sizing: border-box;
  box-shadow: 0 0 0 1px #8ccdf2;
  display: flex;
  flex-direction: column;
}
.dlg-title {
  height: 21px;
  background: #fff;
  display: flex;
  align-items: center;
  padding-left: 2px;
  flex: none;
  font-size: 9px;
  color: #444;
}
.dlg-title span:first-child { flex: 1; }
.dlg-q { margin-right: 23px; font-size: 10px; }
.dlg-title svg { margin-right: 12px; }
.dlg-body { flex: 1; display: flex; padding: 1px 4px 0 4px; gap: 7px; min-height: 0; }
.side {
  width: 74px;
  flex: none;
  background: #fff;
  border: 1px solid #a8a8a8;
  box-sizing: border-box;
  padding: 1px;
}
.side-item {
  height: 18.200px;
  line-height: 18px;
  padding-left: 5px;
  color: #555;
}
.side-item.line { border-bottom: 1px solid #ececec; }
.side-item.dim { color: #777; }
.side-item.on {
  height: 14px;
  line-height: 15px;
  margin-bottom: 5px;
  background: linear-gradient(#ffe58a, #ffd35c);
  color: #444;
  outline: 3px solid #d81c1c;
  box-shadow: 2px 2px 3px rgba(0, 0, 0, .4);
}
.panel {
  flex: 1;
  background: #fff;
  border: 1px solid #a8a8a8;
  box-sizing: border-box;
  position: relative;
  padding-left: 4px;
  color: #555;
}
.panel-title { height: 23px; line-height: 25px; font-size: 12px; color: #333; }
.radio-row { height: 13.300px; display: flex; align-items: center; gap: 4px; white-space: nowrap; font-size: 9px; }
.radio { width: 9px; height: 9px; border: 1px solid #777; border-radius: 50%; box-sizing: border-box; background: #fff; position: relative; flex: none; }
.radio.on::after { content: ""; position: absolute; left: 1.500px; top: 1.500px; width: 4px; height: 4px; border-radius: 50%; background: #222; }
.radio-row.marked { position: relative; z-index: 1; }
.radio-row.marked::after {
  content: "";
  position: absolute;
  left: -7px;
  top: -1px;
  width: 76px;
  height: 15px;
  box-sizing: border-box;
  border: 2px solid #d81c1c;
  box-shadow: 2px 2px 3px rgba(0, 0, 0, .3);
}
.frow { margin-left: 13px; font-size: 9px; display: flex; align-items: center; white-space: nowrap; }
.preset-row { height: 18px; margin-top: 1px; position: relative; }
.preset-btn {
  position: absolute;
  left: 61px;
  top: 0;
  width: 29px;
  height: 18px;
  background: #e6e6e6;
  border: 1px solid #ccc;
  box-sizing: border-box;
  display: flex;
  align-items: center;
  justify-content: center;
  gap: 4px;
}
.preset-chip { width: 10px; height: 10px; background: linear-gradient(135deg, #b8d4f4, #5888c8); border: 1px solid #8aa; display: block; box-sizing: border-box; }
.h19 { height: 19px; }
.h18 { height: 18px; }
.stops-title { height: 8px; gap: 4px; }
.stops-title i { flex: 1; height: 1px; background: #ddd; margin-right: 14px; }
.stops { height: 28px; position: relative; }
.stop-mark {
  position: absolute;
  left: 19px;
  top: 5px;
  width: 11px;
  height: 20px;
  background: linear-gradient(#000090 70%, #fff 70%);
  box-sizing: border-box;
  clip-path: polygon(0 0, 100% 0, 100% 72%, 50% 100%, 0 72%);
  border: 1px solid #e88830;
}
.stop-bar { position: absolute; left: 30px; top: 8px; width: 205px; height: 12px; background: linear-gradient(90deg, #12007c, #55008a 40%, #d00040); }
.stop-btn { position: absolute; left: 235px; top: 8px; width: 7px; height: 13px; background: #e0e0e0; border: 1px solid #ccc; box-sizing: border-box; }
.frow.sub { margin-left: 19px; height: 19.500px; }
.color-btn { width: 20px; height: 18px; margin-left: 9px; background: #e6e6e6; border: 1px solid #ccc; box-sizing: border-box; display: flex; align-items: center; justify-content: center; }
.check-row { margin: 3px 0 0 13px; display: flex; align-items: center; gap: 5px; color: #aaa; font-size: 9px; }
.check { width: 10px; height: 10px; border: 1px solid #ccc; background: #fff; box-sizing: border-box; }

.gallery {
  position: absolute;
  left: 78px;
  top: 123px;
  width: 162px;
  height: 162px;
  background: #fff;
  border: 1px solid #c0c0c0;
  box-sizing: border-box;
  box-shadow: 1px 1px 2px rgba(0, 0, 0, .2);
  display: grid;
  grid-template-columns: repeat(5, 26px);
  grid-auto-rows: 26px;
  gap: 6px;
  padding: 2px 0 0 1px;
}
.swatch { border-radius: 4px; box-shadow: 0 0 0 1px #b4c4dc inset; }
.swatch-mark {
  position: absolute;
  left: -4px;
  top: 2px;
  width: 41px;
  height: 31px;
  box-sizing: border-box;
  border: 3px solid #e01818;
}
.tip {
  position: absolute;
  left: 17px;
  top: 39px;
  height: 14px;
  line-height: 13px;
  padding: 0 2px;
  background: #f4f4f4;
  border: 1px solid #aaa;
  box-sizing: border-box;
  white-space: nowrap;
  box-shadow: 1px 1px 1px rgba(0, 0, 0, .2);
}
.cursor { position: absolute; left: 16px; top: 19px; }
.dlg-foot { height: 23px; display: flex; justify-content: flex-end; align-items: center; padding-right: 5px; flex: none; }
.dlg-close {
  width: 53px;
  height: 15px;
  background: #e4e4e4;
  border: 1px solid #b4b4b4;
  box-sizing: border-box;
  text-align: center;
  line-height: 13px;
  color: #333;
}

.badge {
  position: absolute;
  left: 986px;
  top: 143px;
  width: 32px;
  height: 32px;
  border-radius: 50%;
  background: radial-gradient(circle at 40% 30%, #8ce88c, #28a838);
  border: 1px solid #b0c0b0;
  color: #fff;
  font: bold 9px/30px "Liberation Sans", sans-serif;
  padding-left: 2px;
  box-sizing: border-box;
}
.ime {
  position: absolute;
  right: 0;
  top: 516px;
  width: 35px;
  height: 16px;
  background: #fff;
  display: flex;
  align-items: center;
  gap: 6px;
  padding-left: 6px;
  box-sizing: border-box;
}
.ime-s { width: 11px; height: 11px; background: #f05a20; color: #fff; text-align: center; font: bold 9px/11px "Liberation Sans", sans-serif; border-radius: 2px; }
.ime-dots { width: 2px; height: 8px; border-top: 2px solid #222; border-bottom: 2px solid #222; box-sizing: border-box; }

.taskbar {
  height: 30px;
  margin-top: 2px;
  flex: none;
  background: #040404;
  display: flex;
  align-items: center;
  color: #ddd;
  position: relative;
}
.task-left { display: flex; height: 100%; }
.task-slot {
  width: 35.500px;
  height: 100%;
  display: flex;
  align-items: center;
  justify-content: center;
  flex: none;
  box-sizing: border-box;
}
.task-slot.active { background: #2c2e30; border-bottom: 2px solid #8ec8e8; }
.task-slot:nth-child(5), .task-slot:nth-child(6), .task-slot:nth-child(4) { border-bottom: 2px solid #8ec8e8; border-left: 3px solid #040404; border-right: 3px solid #040404; }
.tray { position: absolute; left: 555px; display: flex; gap: 5.500px; }
.tray svg { width: 12px; height: 12px; flex: none; }
.clock {
  position: absolute;
  left: 885px;
  width: 76px;
  text-align: center;
  font-size: 9.500px;
  line-height: 14px;
}
.notify { position: absolute; left: 969px; top: 8px; }

.watermark {
  position: absolute;
  left: 768px;
  top: 478px;
  width: 185px;
  color: rgba(255, 255, 255, .85);
  text-shadow: 0 0 1px #ccc;
  pointer-events: none;
}
.wm-paw { position: absolute; left: 66px; top: -24px; fill: #fff; stroke: #e0e0e0; }
.wm-top { display: flex; align-items: flex-end; height: 38px; position: relative; }
.wm-bai { font: bold 32px/36px "Liberation Sans", sans-serif; }
.wm-du { font: bold 19px/26px "Liberation Sans", sans-serif; width: 40px; height: 32px; border-radius: 50%; border: 3px solid #fff; box-shadow: 0 0 1px #bbb; text-align: center; box-sizing: border-box; margin: 0 4px; }
.wm-cn { font: bold 26px/34px "Noto Sans CJK SC", sans-serif; }
.wm-url { font: 16px/13px "Liberation Sans", sans-serif; letter-spacing: 2px; margin-top: 7px; white-space: nowrap; color: rgba(255, 255, 255, .6); text-shadow: none; }
</style>
